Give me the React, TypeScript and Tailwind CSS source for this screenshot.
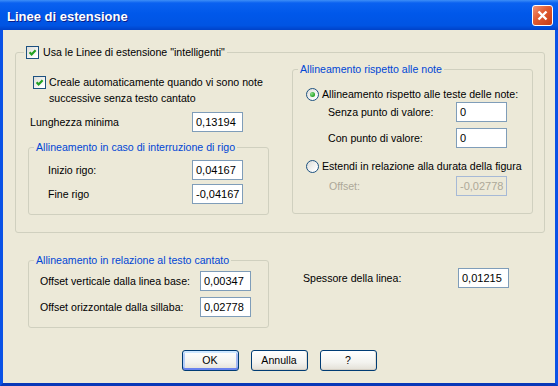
import React from "react";

const fontClass = "font-['Liberation_Sans',Arial,sans-serif]";

const groupClass = "m-0 border border-[#d0d0bf] rounded-[3px] p-0";

const legendClass =
  "ml-[5px] px-[2px] h-[14px] flex items-center whitespace-nowrap text-[#0046d5]";

function Checkbox({ className = "" }: { className?: string }) {
  return (
    <span
      className={`flex h-[13px] w-[13px] shrink-0 items-center justify-center border border-[#1c5180] bg-[linear-gradient(135deg,#dcdcd7,#ffffff_85%)] ${className}`}
    >
      <svg width="11" height="11" viewBox="0 0 11 11">
        <path
          d="M2.6 5.2 L4.6 7.4 L8.6 3.2"
          fill="none"
          stroke="#21a121"
          strokeWidth="2.2"
        />
      </svg>
    </span>
  );
}

function Radio({ checked }: { checked?: boolean }) {
  return (
    <span className="flex h-[13px] w-[13px] shrink-0 items-center justify-center rounded-full border border-[#1c5180] bg-[linear-gradient(135deg,#dcdcd7,#ffffff_85%)]">
      {checked && (
        <span className="h-[5px] w-[5px] rounded-full bg-[radial-gradient(circle_at_35%_35%,#8ee08e,#21a121_70%)]" />
      )}
    </span>
  );
}

function TextBox({ value, disabled }: { value: string; disabled?: boolean }) {
  return (
    <div
      className={
        disabled
          ? "flex h-[20px] w-[51px] shrink-0 items-center border border-[#a6b9d6] pl-[3px] text-[11px] text-[#aca899]"
          : "flex h-[20px] w-[51px] shrink-0 items-center border border-[#7f9db9] bg-white pl-[3px] text-[11px] text-black"
      }
    >
      {value}
    </div>
  );
}

function XpButton({ label, isDefault }: { label: string; isDefault?: boolean }) {
  return (
    <button
      type="button"
      className={
        isDefault
          ? "flex h-[21px] w-[57px] items-center justify-center rounded-[3px] border border-[#003c74] bg-[linear-gradient(to_bottom,#ffffff,#f3f3ef_60%,#e3e0d6)] text-black shadow-[inset_0_2px_0_#cee7ff,inset_0_-2px_0_#6982ee,inset_2px_0_0_#b5cef8,inset_-2px_0_0_#a3b8f3]"
          : "flex h-[21px] w-[57px] items-center justify-center rounded-[3px] border border-[#003c74] bg-[linear-gradient(to_bottom,#ffffff,#f3f3ef_60%,#e3e0d6)] text-black shadow-[inset_0_-1px_0_#d6d0c5,inset_-1px_0_0_#e2ded4]"
      }
    >
      {label}
    </button>
  );
}

export default function App() {
  return (
    <div className={`flex h-[386px] w-[558px] flex-col ${fontClass} text-[10.6px] leading-[13px] text-black`}>
      {/* title bar */}
      <div className="flex h-[30px] shrink-0 items-center justify-between bg-[linear-gradient(to_bottom,#3d8ef7_0%,#0a61f0_10%,#0058ea_45%,#0054e3_85%,#0042c8_100%)] pl-[7px] pr-[5px]">
        <span className="pt-[2px] text-[13px] font-bold text-white [text-shadow:1px_1px_0_#0a1e8a]">
          Linee di estensione
        </span>
        <button
          type="button"
          className="flex h-[21px] w-[21px] items-center justify-center rounded-[3px] border border-white bg-[linear-gradient(135deg,#f29478,#e05a30_45%,#c63c14)]"
          aria-label="Chiudi"
        >
          <svg width="13" height="13" viewBox="0 0 13 13">
            <path d="M2.5 2.5 L10.5 10.5 M10.5 2.5 L2.5 10.5" stroke="#ffffff" strokeWidth="2.4" />
          </svg>
        </button>
      </div>

      {/* client area */}
      <div className="flex flex-1 flex-col border-x-[3px] border-b-[3px] border-x-[#0a52e6] border-b-[#0838b8] bg-[#ece9d8]">
        <fieldset className={`${groupClass} ml-[12px] mt-[15px] w-[530px]`}>
          <legend className="ml-[8px] flex h-[14px] items-center gap-[4px] whitespace-nowrap px-[2px]">
            <Checkbox />
            <span>Usa le Linee di estensione "intelligenti"</span>
          </legend>
          <div className="flex items-start pb-[17px] pl-[12px]">
            {/* left column */}
            <div className="flex w-[241px] flex-col">
              <div className="ml-[5px] mt-[15px] flex items-start gap-[3px] whitespace-nowrap">
                <Checkbox className="mt-[2px]" />
                <span className="leading-[16px]">
                  Creale automaticamente quando vi sono note
                  <br />
                  successive senza testo cantato
                </span>
              </div>
              <div className="mt-[6px] flex h-[20px] items-center pl-[2px]">
                <span className="w-[162px]">Lunghezza minima</span>
                <TextBox value="0,13194" />
              </div>
              <fieldset className={`${groupClass} mt-[8px] w-[241px]`}>
                <legend className={legendClass}>Allineamento in caso di interruzione di rigo</legend>
                <div className="flex flex-col gap-[4px] pb-[10px] pt-[6px]">
                  <div className="flex h-[20px] items-center pl-[19px]">
                    <span className="w-[144px]">Inizio rigo:</span>
                    <TextBox value="0,04167" />
                  </div>
                  <div className="flex h-[20px] items-center pl-[19px]">
                    <span className="w-[144px]">Fine rigo</span>
                    <TextBox value="-0,04167" />
                  </div>
                </div>
              </fieldset>
            </div>

            {/* right column */}
            <fieldset className={`${groupClass} ml-[23px] mt-[3px] w-[241px]`}>
              <legend className={legendClass}>Allineamento rispetto alle note</legend>
              <div className="flex flex-col whitespace-nowrap pb-[17px]">
                <div className="mt-[11px] flex h-[14px] items-center gap-[3px] pl-[13px]">
                  <Radio checked />
                  <span>Allineamento rispetto alle teste delle note:</span>
                </div>
                <div className="mt-[1px] flex h-[20px] items-center pl-[35px]">
                  <span className="w-[128px]">Senza punto di valore:</span>
                  <TextBox value="0" />
                </div>
                <div className="mt-[6px] flex h-[20px] items-center pl-[35px]">
                  <span className="w-[128px]">Con punto di valore:</span>
                  <TextBox value="0" />
                </div>
                <div className="mt-[11px] flex h-[14px] items-center gap-[3px] pl-[13px]">
                  <Radio />
                  <span>Estendi in relazione alla durata della figura</span>
                </div>
                <div className="mt-[3px] flex h-[20px] items-center pl-[36px]">
                  <span className="w-[127px] text-[#aca899]">Offset:</span>
                  <TextBox value="-0,02778" disabled />
                </div>
              </div>
            </fieldset>
          </div>
        </fieldset>

        <div className="ml-[25px] mt-[20px] flex items-start whitespace-nowrap">
          <fieldset className={`${groupClass} w-[241px]`}>
            <legend className={legendClass}>Allineamento in relazione al testo cantato</legend>
            <div className="flex flex-col gap-[6px] pb-[10px] pt-[4px]">
              <div className="flex h-[20px] items-center pl-[11px]">
                <span className="w-[160px]">Offset verticale dalla linea base:</span>
                <TextBox value="0,00347" />
              </div>
              <div className="flex h-[20px] items-center pl-[11px]">
                <span className="w-[160px]">Offset orizzontale dalla sillaba:</span>
                <TextBox value="0,02778" />
              </div>
            </div>
          </fieldset>
          <div className="ml-[34px] mt-[15px] flex h-[20px] items-center">
            <span className="w-[155px]">Spessore della linea:</span>
            <TextBox value="0,01215" />
          </div>
        </div>

        <div className="mt-[22px] flex justify-center gap-[12px]">
          <XpButton label="OK" isDefault />
          <XpButton label="Annulla" />
          <XpButton label="?" />
        </div>
      </div>
    </div>
  );
}
